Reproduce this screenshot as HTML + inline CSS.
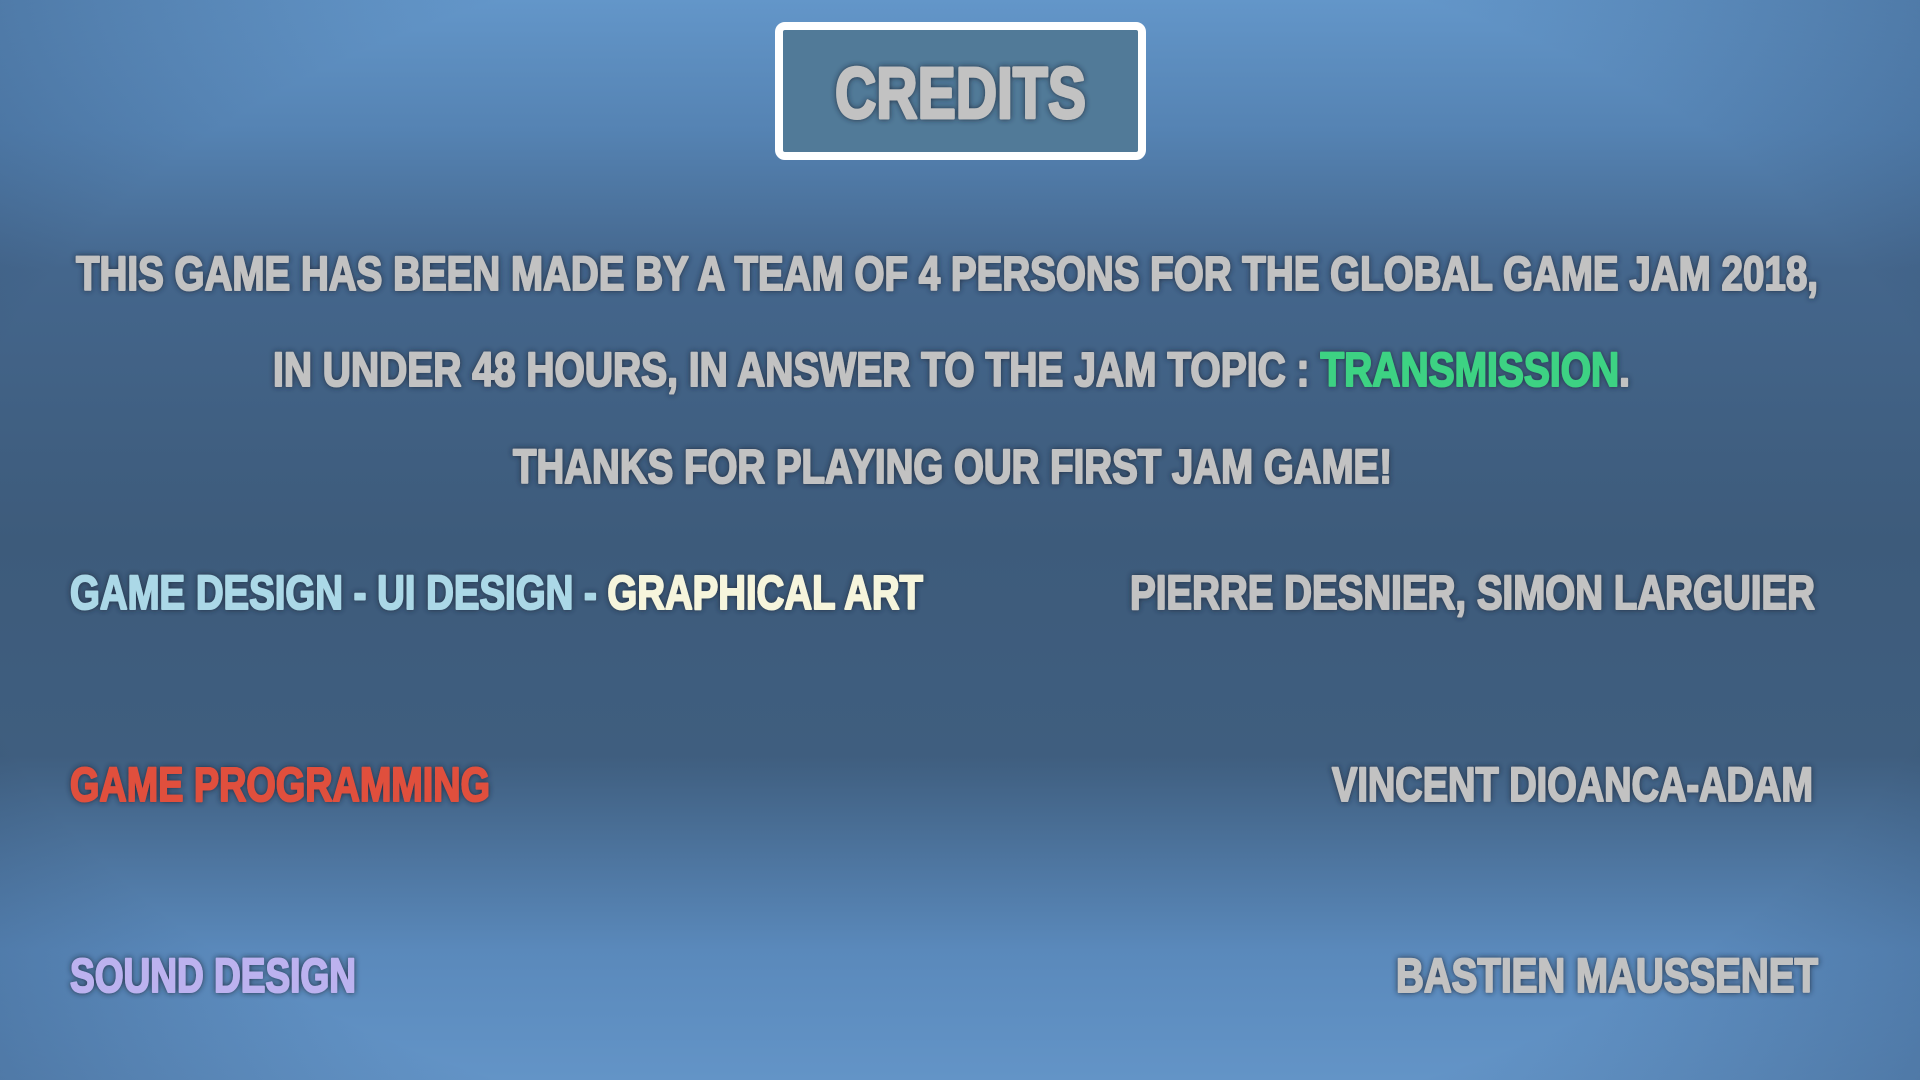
<!DOCTYPE html>
<html><head><meta charset="utf-8"><style>
html,body{margin:0;padding:0;width:1920px;height:1080px;overflow:hidden}
body{background:linear-gradient(180deg,#6396c9 0%,#5583b3 12%,#44668c 25%,#3d5b7b 50%,#3f5e7f 70%,#5a89bb 88%,#6394c7 100%);position:relative}
.vig{position:absolute;inset:0;background:radial-gradient(ellipse 75% 80% at 50% 50%,rgba(0,0,0,0) 70%,rgba(20,40,70,0.35) 100%)}
svg{position:absolute;left:0;top:0}
text{font-family:"Liberation Sans",sans-serif;font-weight:bold;fill:#c2c2c2;stroke:#c2c2c2;stroke-width:2;stroke-linejoin:round}
tspan.b{fill:#abd8e7;stroke:#abd8e7}
tspan.c{fill:#f6f5dc;stroke:#f6f5dc}
tspan.g{fill:#3dd283;stroke:#3dd283}
</style></head><body>
<div class="vig"></div>
<svg width="1920" height="1080" viewBox="0 0 1920 1080">
<defs><filter id="s" x="-5%" y="-30%" width="110%" height="160%"><feDropShadow dx="0" dy="0" stdDeviation="3" flood-color="#1b2a3a" flood-opacity="0.9"/></filter></defs>
<rect x="779" y="26" width="363" height="130" rx="6" fill="#517a98" stroke="#fff" stroke-width="8"/>
<g filter="url(#s)">
<text x="835" y="118" font-size="72" textLength="251" lengthAdjust="spacingAndGlyphs" style="stroke-width:3">CREDITS</text>
<text x="76" y="290" font-size="48" textLength="1742" lengthAdjust="spacingAndGlyphs">THIS GAME HAS BEEN MADE BY A TEAM OF 4 PERSONS FOR THE GLOBAL GAME JAM 2018,</text>
<text x="273" y="386" font-size="48" textLength="1357" lengthAdjust="spacingAndGlyphs">IN UNDER 48 HOURS, IN ANSWER TO THE JAM TOPIC : <tspan class="g">TRANSMISSION</tspan>.</text>
<text x="513" y="483" font-size="48" textLength="879" lengthAdjust="spacingAndGlyphs">THANKS FOR PLAYING OUR FIRST JAM GAME!</text>
<text x="70" y="609" font-size="48" textLength="853" lengthAdjust="spacingAndGlyphs"><tspan class="b">GAME DESIGN - UI DESIGN - </tspan><tspan class="c">GRAPHICAL ART</tspan></text>
<text x="1130" y="609" font-size="48" textLength="685" lengthAdjust="spacingAndGlyphs">PIERRE DESNIER, SIMON LARGUIER</text>
<text x="70" y="801" font-size="48" textLength="420" lengthAdjust="spacingAndGlyphs" style="fill:#e0503c;stroke:#e0503c">GAME PROGRAMMING</text>
<text x="1332" y="801" font-size="48" textLength="481" lengthAdjust="spacingAndGlyphs">VINCENT DIOANCA-ADAM</text>
<text x="70" y="992" font-size="48" textLength="286" lengthAdjust="spacingAndGlyphs" style="fill:#bcb2ef;stroke:#bcb2ef">SOUND DESIGN</text>
<text x="1396" y="992" font-size="48" textLength="422" lengthAdjust="spacingAndGlyphs">BASTIEN MAUSSENET</text>
</g>
</svg>
</body></html>
